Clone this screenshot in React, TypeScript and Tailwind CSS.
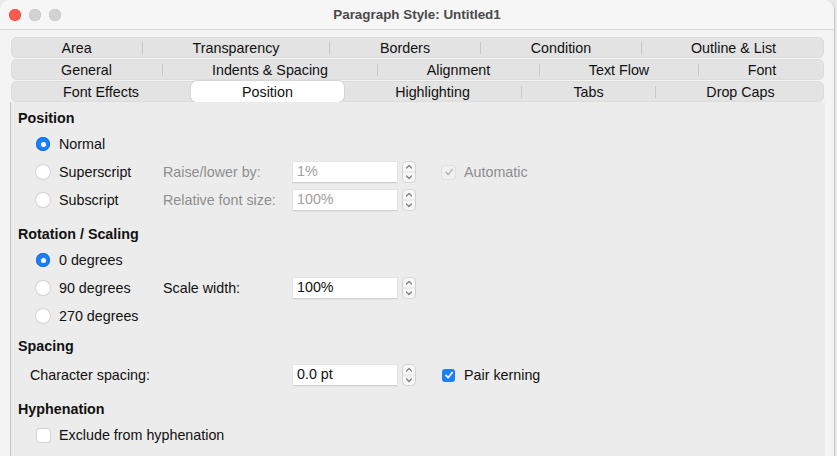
import React from 'react'

type Seg = { label: string; w: number; selected?: boolean }

const ROWS: Seg[][] = [
  [
    { label: 'Area', w: 131 },
    { label: 'Transparency', w: 186 },
    { label: 'Borders', w: 150 },
    { label: 'Condition', w: 160 },
    { label: 'Outline & List', w: 183 },
  ],
  [
    { label: 'General', w: 151 },
    { label: 'Indents & Spacing', w: 214 },
    { label: 'Alignment', w: 161 },
    { label: 'Text Flow', w: 158 },
    { label: 'Font', w: 126 },
  ],
  [
    { label: 'Font Effects', w: 180 },
    { label: 'Position', w: 153, selected: true },
    { label: 'Highlighting', w: 177 },
    { label: 'Tabs', w: 133 },
    { label: 'Drop Caps', w: 169 },
  ],
]

function TabRow({ segs }: { segs: Seg[] }) {
  return (
    <div className="h-[21px] mb-[1px] mx-[1px] rounded-[6px] bg-[#e3e3e3] shadow-[inset_0_0_0_1px_#dcdcdc] flex items-center">
      {segs.map((s, i) => {
        const prev = segs[i - 1]
        const showSep = i > 0 && !s.selected && !prev?.selected
        return (
          <React.Fragment key={s.label}>
            {showSep && <span className="w-px h-[12px] bg-[#c9c9c9] shrink-0" />}
            <div
              className={
                s.selected
                  ? 'h-[21px] pt-[2px] shrink-0 flex items-center justify-center bg-white rounded-[6px] shadow-[0_0_0_1px_#d6d6d6,0_1px_1px_rgba(0,0,0,0.08)] text-[#111]'
                  : 'h-[21px] pt-[2px] shrink-0 flex items-center justify-center text-[#111]'
              }
              style={{ width: s.w }}
            >
              {s.label}
            </div>
          </React.Fragment>
        )
      })}
    </div>
  )
}

function Radio({ on }: { on?: boolean }) {
  return on ? (
    <span className="w-[14px] h-[14px] rounded-full bg-[#1a7ff8] shadow-[inset_0_0_0_1px_#1470e0] flex items-center justify-center shrink-0">
      <span className="w-[5px] h-[5px] rounded-full bg-white" />
    </span>
  ) : (
    <span className="w-[14px] h-[14px] rounded-full bg-white shadow-[0_0_0_1px_#d4d4d4,0_1px_1px_rgba(0,0,0,0.06)] shrink-0" />
  )
}

function Check({ state }: { state: 'on' | 'off' | 'disabled' }) {
  if (state === 'on')
    return (
      <span className="w-[13px] h-[13px] rounded-[3px] bg-[#1a7ff8] flex items-center justify-center shrink-0">
        <svg width="10" height="10" viewBox="0 0 10 10">
          <path d="M2 5.3 L4.2 7.6 L8.2 2.4" fill="none" stroke="white" strokeWidth="1.7" strokeLinecap="round" strokeLinejoin="round" />
        </svg>
      </span>
    )
  if (state === 'disabled')
    return (
      <span className="w-[13px] h-[13px] rounded-[3px] bg-[#f0f0f0] shadow-[0_0_0_1px_#dedede] flex items-center justify-center shrink-0">
        <svg width="10" height="10" viewBox="0 0 10 10">
          <path d="M2 5.3 L4.2 7.6 L8.2 2.4" fill="none" stroke="#b5b5b5" strokeWidth="1.5" strokeLinecap="round" strokeLinejoin="round" />
        </svg>
      </span>
    )
  return <span className="w-[13px] h-[13px] rounded-[3px] bg-white shadow-[0_0_0_1px_#d4d4d4,0_1px_1px_rgba(0,0,0,0.06)] shrink-0" />
}

function Spinner() {
  return (
    <svg width="14" height="22" viewBox="0 0 14 22" className="ml-[5px] shrink-0">
      <rect x="0.5" y="0.5" width="13" height="21" rx="4" fill="#f7f7f7" stroke="#d2d2d2" />
      <line x1="1" y1="11" x2="13" y2="11" stroke="#e0e0e0" />
      <path d="M4.5 7 L7 4.5 L9.5 7" fill="none" stroke="#7d7d7d" strokeWidth="1.2" strokeLinecap="round" strokeLinejoin="round" />
      <path d="M4.5 15 L7 17.5 L9.5 15" fill="none" stroke="#7d7d7d" strokeWidth="1.2" strokeLinecap="round" strokeLinejoin="round" />
    </svg>
  )
}

function Field({ value, disabled }: { value: string; disabled?: boolean }) {
  return (
    <div className="flex items-center">
      <div
        className={
          'w-[104px] h-[21px] bg-white border-b border-[#cfcfcf] shadow-[0_0_0_1px_#e4e4e4] flex items-center pl-[4px] pt-[1px] ' +
          (disabled ? 'text-[#a0a0a0]' : 'text-[#111]')
        }
      >
        {value}
      </div>
      <Spinner />
    </div>
  )
}

function Option({
  on,
  label,
  side,
}: {
  on?: boolean
  label: string
  side?: React.ReactNode
}) {
  return (
    <div className="h-[28px] flex items-center pl-[18px]">
      <div className="w-[127px] flex items-center gap-[9px]">
        <Radio on={on} />
        <span className="text-[#111] pt-[1px]">{label}</span>
      </div>
      {side}
    </div>
  )
}

export default function App() {
  return (
    <div className="w-[837px] h-[456px] bg-[#e9e9e9] overflow-hidden font-['Liberation_Sans',Arial,sans-serif] text-[14.3px]">
      <div className="w-[835px] h-full rounded-t-[10px] bg-[#f4f4f4] border-r border-[#c6c6c6] flex flex-col overflow-hidden">
        <div className="h-[30px] shrink-0 bg-[#f6f6f6] border-b border-[#d6d6d6] relative flex items-center justify-center">
          <div className="absolute left-[9px] top-[9px] flex gap-[8px]">
            <span className="w-[12px] h-[12px] rounded-full bg-[#fd5b54] shadow-[inset_0_0_0_0.5px_#e0443e]" />
            <span className="w-[12px] h-[12px] rounded-full bg-[#d3d3d3] shadow-[inset_0_0_0_0.5px_#bdbdbd]" />
            <span className="w-[12px] h-[12px] rounded-full bg-[#d3d3d3] shadow-[inset_0_0_0_0.5px_#bdbdbd]" />
          </div>
          <span className="font-bold text-[#4a4a4a] text-[13.4px] pt-[1px]">Paragraph Style: Untitled1</span>
        </div>

        <div className="flex-1 flex flex-col pl-[10px] pr-[9px] pt-[7px]">
          {ROWS.map((r, i) => (
            <TabRow key={i} segs={r} />
          ))}

          <div className="flex-1 -mt-[1px] bg-[#ececec] border-l border-[#c4c4c4] pl-[7px] pt-[7px] flex flex-col">
            <div className="h-[20px] flex items-center font-bold text-[#111]">Position</div>
            <div className="mt-[1px]">
              <Option on label="Normal" />
              <Option
                label="Superscript"
                side={
                  <div className="flex items-center">
                    <span className="w-[130px] text-[#8e8e8e] pt-[1px]">Raise/lower by:</span>
                    <Field value="1%" disabled />
                    <div className="ml-[26px] flex items-center gap-[9px]">
                      <Check state="disabled" />
                      <span className="text-[#8e8e8e] pt-[1px]">Automatic</span>
                    </div>
                  </div>
                }
              />
              <Option
                label="Subscript"
                side={
                  <div className="flex items-center">
                    <span className="w-[130px] text-[#8e8e8e] pt-[1px]">Relative font size:</span>
                    <Field value="100%" disabled />
                  </div>
                }
              />
            </div>

            <div className="h-[20px] mt-[11px] flex items-center font-bold text-[#111]">Rotation / Scaling</div>
            <div className="mt-[1px]">
              <Option on label="0 degrees" />
              <Option
                label="90 degrees"
                side={
                  <div className="flex items-center">
                    <span className="w-[130px] text-[#111] pt-[1px]">Scale width:</span>
                    <Field value="100%" />
                  </div>
                }
              />
              <Option label="270 degrees" />
            </div>

            <div className="h-[20px] mt-[7px] flex items-center font-bold text-[#111]">Spacing</div>
            <div className="h-[28px] mt-[4px] flex items-center pl-[12px]">
              <span className="w-[263px] text-[#111] pt-[1px]">Character spacing:</span>
              <Field value="0.0 pt" />
              <div className="ml-[26px] flex items-center gap-[9px]">
                <Check state="on" />
                <span className="text-[#111] pt-[1px]">Pair kerning</span>
              </div>
            </div>

            <div className="h-[20px] mt-[11px] flex items-center font-bold text-[#111]">Hyphenation</div>
            <div className="h-[28px] mt-[1px] flex items-center pl-[19px] gap-[9px]">
              <Check state="off" />
              <span className="text-[#111] pt-[1px]">Exclude from hyphenation</span>
            </div>
          </div>
        </div>
      </div>
    </div>
  )
}
